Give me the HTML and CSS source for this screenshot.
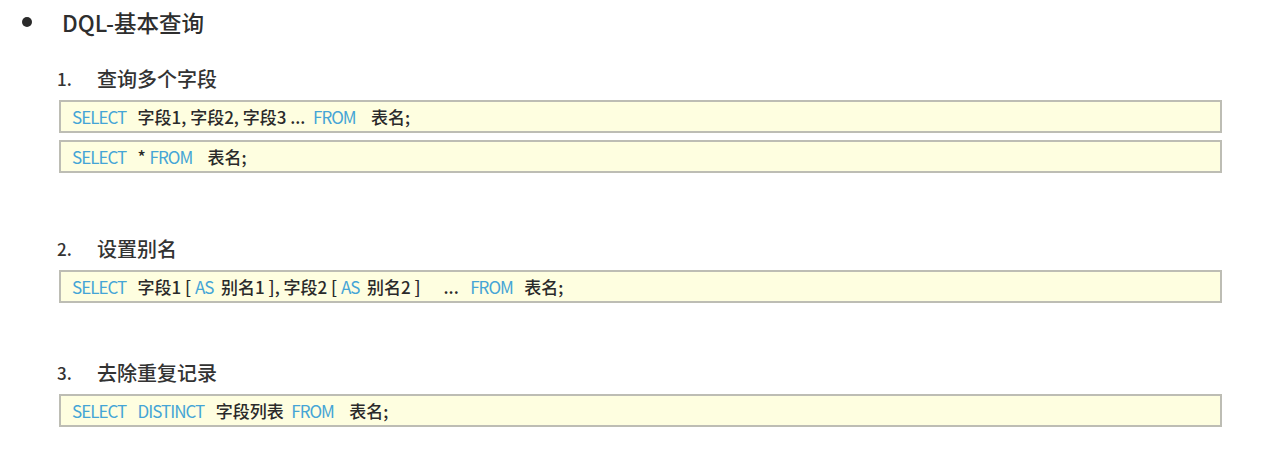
FILE: index.html
```html
<!DOCTYPE html>
<html lang="zh-CN">
<head>
<meta charset="utf-8">
<title>DQL-基本查询</title>
<link rel="stylesheet" href="styles.css">
</head>
<body>
<div class="page">
  <div class="title"><span class="dot"></span><span class="title-text">DQL-基本查询</span></div>

  <section class="item item-1">
    <div class="item-head"><span class="num">1.</span><span>查询多个字段</span></div>
    <div class="code"><span class="kw">SELECT</span>   字段1, 字段2, 字段3 ...  <span class="kw">FROM</span>    表名;</div>
    <div class="code"><span class="kw">SELECT</span>   * <span class="kw">FROM</span>    表名;</div>
  </section>

  <section class="item item-2">
    <div class="item-head"><span class="num">2.</span><span>设置别名</span></div>
    <div class="code"><span class="kw">SELECT</span>   字段1 [ <span class="kw">AS</span>  别名1 ], 字段2 [ <span class="kw">AS</span>  别名2 ]      ...   <span class="kw">FROM</span>   表名;</div>
  </section>

  <section class="item item-3">
    <div class="item-head"><span class="num">3.</span><span>去除重复记录</span></div>
    <div class="code"><span class="kw">SELECT</span>   <span class="kw">DISTINCT</span>   字段列表  <span class="kw">FROM</span>    表名;</div>
  </section>
</div>
</body>
</html>
```
FILE: styles.css
```css
html, body {
  margin: 0;
  padding: 0;
  background: #ffffff;
}
body {
  font-family: "Noto Sans CJK SC", "Noto Sans", sans-serif;
  color: #333333;
}
.page {
  display: flex;
  flex-direction: column;
  padding: 8px 46px 0 0;
}
.title {
  display: flex;
  align-items: center;
  height: 28px;
  padding-left: 22px;
}
.dot {
  width: 10px;
  height: 10px;
  border-radius: 50%;
  background: #2a2a2a;
  margin-right: 30px;
}
.title-text {
  font-size: 22.5px;
  line-height: 28px;
  font-weight: 500;
  color: #2e2e2e;
}
.item {
  display: flex;
  flex-direction: column;
  gap: 7px;
  padding-left: 59px;
}
.item-1 { margin-top: 28px; }
.item-2 { margin-top: 61px; }
.item-3 { margin-top: 55px; }
.item-head {
  display: flex;
  align-items: center;
  height: 28px;
  margin-left: -2px;
  margin-bottom: 1px;
  font-size: 20px;
  font-weight: 500;
  color: #333333;
}
.num {
  width: 40px;
  font-size: 17px;
}
.code {
  box-sizing: border-box;
  height: 33px;
  line-height: 29px;
  padding-left: 11px;
  border: 2px solid #bdbdb4;
  background: #fefee0;
  font-size: 17px;
  font-weight: 500;
  white-space: pre;
  color: #2a2a2a;
}
.kw {
  font-size: 17px;
  letter-spacing: -1px;
  font-weight: 400;
  color: #45a5d6;
}
```
